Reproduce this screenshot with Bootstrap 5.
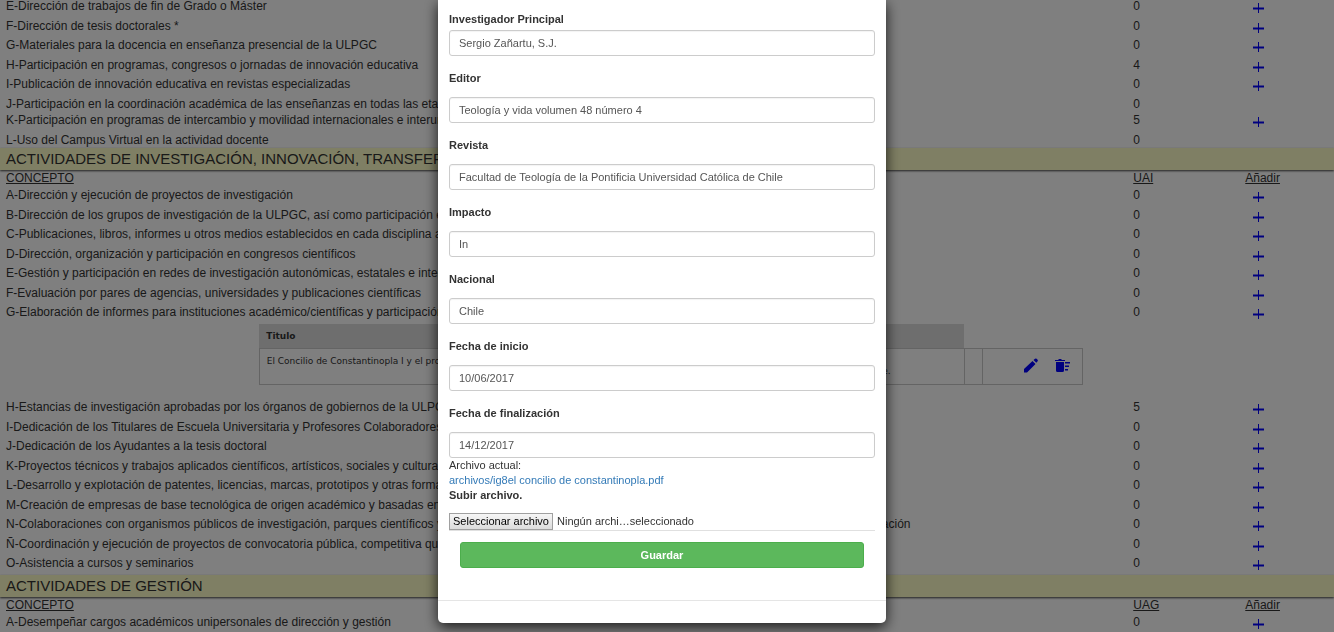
<!DOCTYPE html>
<html lang="es">
<head>
<meta charset="utf-8">
<meta name="viewport" content="width=device-width, initial-scale=1">
<title>Actividades del profesorado</title>
<link href="https://cdn.jsdelivr.net/npm/bootstrap@5.3.0/dist/css/bootstrap.min.css" rel="stylesheet">
<style>
body { font-family: "Liberation Sans", Arial, sans-serif; font-size: 12px; line-height: 16px; color: #333; background: #fff; }
.page { height: 100vh; margin-top: -2px; }
.activities { width: 100%; table-layout: fixed; white-space: nowrap; }
.activities .c-name { width: 84.5%; }
.activities .c-units { width: 8.4%; }
.activities > * > tr > th, .activities > * > tr > td { padding: 0 6px; vertical-align: top; }
.activities > thead th { font-weight: 400; text-decoration: underline; height: 17px; }
.activities > tbody > tr { height: 19px; }
.activities > tbody > tr:nth-child(odd) { height: 20px; }
.activities > tbody > tr.no-add { height: 16px; }
.activities a { color: #00f; display: block; }
.activities svg { display: block; }
.activities .add { padding-top: 5px; margin-left: 8px; width: 11px; }
.band { background: #ffffc8; font-size: 15px; line-height: 22px; height: 22px; padding: 0 6px; margin: 0; font-weight: 400; box-shadow: 0 1px 2px #444; position: relative; }
.activities > tbody > tr > td.detail { padding: 0; height: 75px; }
.works { width: 61.8%; margin-left: 19.4%; table-layout: fixed; font-family: "DejaVu Sans", Verdana, sans-serif; font-size: 9px; line-height: 10px; }
.works th { background: #ddd; height: 24px; padding: 0 7px; }
.works th.blank { background: none; }
.works td { border: 1px solid #c8c8c8; height: 36px; padding: 7px; vertical-align: top; }
.works td + td:not(.tool) { border-left: 0; }
.works td.tool { padding-top: 9px; }
.works .w-title { width: 43.6%; }
.works .w-place { width: 42%; }
.works .w-gap { width: 2.2%; }
.works .place { padding-right: 66px; }
.modal { padding-right: 10px; overflow: hidden; }
.modal-dialog { max-width: 448px; margin: 0 auto; }
.modal-content { border: 0; border-radius: 0 0 5px 5px; box-shadow: 0 4px 14px rgba(0,0,0,.8); font-size: 11px; line-height: 15px; color: #333; }
.modal-body { padding: 12px 11px 32px; }
.field { margin-bottom: 15px; }
.field.last { margin-bottom: 0; }
.field label { display: block; font-weight: 700; margin-bottom: 11px; }
.field.first label { margin-bottom: 3px; }
.upload-title { font-weight: 700; margin-bottom: 10px; }
.field .form-control { height: 26px; font-size: 11px; line-height: 15px; padding: 0 9px; border: 1px solid #ccc; border-radius: 3px; color: #555; box-shadow: inset 0 1px 1px rgba(0,0,0,.05); }
.file-link { color: #337ab7; text-decoration: none; }
.pick { border: 1px solid #a0a0a0; background: linear-gradient(#f6f6f6, #dcdcdc); color: #000; padding: 0 3px; line-height: 15px; cursor: pointer; }
.save-row { border-top: 1px solid #e0e0e0; padding: 11px 11px 0; }
.btn-save { background: #5cb85c; border: 1px solid #4cae4c; color: #fff; font-size: 11px; font-weight: 700; line-height: 15px; height: 26px; padding: 0; border-radius: 3px; }
.modal-footer { min-height: 23px; padding: 0; border-color: #e5e5e5; }
</style>
</head>
<body class="overflow-hidden">
<svg class="d-none">
  <symbol id="plus" viewBox="0 0 11 11"><path d="M0 4.500h11v2H0z" fill="currentColor"/><path d="M5 0h1v10H5z" fill="currentColor"/></symbol>
</svg>
<main class="page overflow-hidden">
  <table class="activities">
    <colgroup><col class="c-name"><col class="c-units"><col></colgroup>
    <tbody>
      <tr><td>E-Dirección de trabajos de fin de Grado o Máster</td><td>0</td><td><a class="add" href="#" aria-label="Añadir"><svg width="11" height="11"><use href="#plus"/></svg></a></td></tr>
      <tr><td>F-Dirección de tesis doctorales *</td><td>0</td><td><a class="add" href="#" aria-label="Añadir"><svg width="11" height="11"><use href="#plus"/></svg></a></td></tr>
      <tr><td>G-Materiales para la docencia en enseñanza presencial de la ULPGC</td><td>0</td><td><a class="add" href="#" aria-label="Añadir"><svg width="11" height="11"><use href="#plus"/></svg></a></td></tr>
      <tr><td>H-Participación en programas, congresos o jornadas de innovación educativa</td><td>4</td><td><a class="add" href="#" aria-label="Añadir"><svg width="11" height="11"><use href="#plus"/></svg></a></td></tr>
      <tr><td>I-Publicación de innovación educativa en revistas especializadas</td><td>0</td><td><a class="add" href="#" aria-label="Añadir"><svg width="11" height="11"><use href="#plus"/></svg></a></td></tr>
      <tr class="no-add"><td>J-Participación en la coordinación académica de las enseñanzas en todas las etapas</td><td>0</td><td></td></tr>
      <tr><td>K-Participación en programas de intercambio y movilidad internacionales e interuniversitarios</td><td>5</td><td><a class="add" href="#" aria-label="Añadir"><svg width="11" height="11"><use href="#plus"/></svg></a></td></tr>
      <tr class="no-add"><td>L-Uso del Campus Virtual en la actividad docente</td><td>0</td><td></td></tr>
    </tbody>
  </table>
  <h2 class="band">ACTIVIDADES DE INVESTIGACIÓN, INNOVACIÓN, TRANSFERENCIA</h2>
  <table class="activities">
    <colgroup><col class="c-name"><col class="c-units"><col></colgroup>
    <thead><tr><th>CONCEPTO</th><th>UAI</th><th>Añadir</th></tr></thead>
    <tbody>
      <tr><td>A-Dirección y ejecución de proyectos de investigación</td><td>0</td><td><a class="add" href="#" aria-label="Añadir"><svg width="11" height="11"><use href="#plus"/></svg></a></td></tr>
      <tr><td>B-Dirección de los grupos de investigación de la ULPGC, así como participación en ellos</td><td>0</td><td><a class="add" href="#" aria-label="Añadir"><svg width="11" height="11"><use href="#plus"/></svg></a></td></tr>
      <tr><td>C-Publicaciones, libros, informes u otros medios establecidos en cada disciplina académica</td><td>0</td><td><a class="add" href="#" aria-label="Añadir"><svg width="11" height="11"><use href="#plus"/></svg></a></td></tr>
      <tr><td>D-Dirección, organización y participación en congresos científicos</td><td>0</td><td><a class="add" href="#" aria-label="Añadir"><svg width="11" height="11"><use href="#plus"/></svg></a></td></tr>
      <tr><td>E-Gestión y participación en redes de investigación autonómicas, estatales e internacionales</td><td>0</td><td><a class="add" href="#" aria-label="Añadir"><svg width="11" height="11"><use href="#plus"/></svg></a></td></tr>
      <tr><td>F-Evaluación por pares de agencias, universidades y publicaciones científicas</td><td>0</td><td><a class="add" href="#" aria-label="Añadir"><svg width="11" height="11"><use href="#plus"/></svg></a></td></tr>
      <tr><td>G-Elaboración de informes para instituciones académico/científicas y participación</td><td>0</td><td><a class="add" href="#" aria-label="Añadir"><svg width="11" height="11"><use href="#plus"/></svg></a></td></tr>
      <tr><td class="detail" colspan="3">
        <table class="works">
          <colgroup><col class="w-title"><col class="w-place"><col class="w-gap"><col></colgroup>
          <thead><tr><th>Titulo</th><th></th><th class="blank"></th><th class="blank"></th></tr></thead>
          <tbody><tr>
            <td>El Concilio de Constantinopla I y el proceso</td>
            <td><div class="place d-flex justify-content-end"><span>Facultad de Teología de la<br>Pontificia Universidad Católica de Chile.</span></div></td>
            <td class="tool"></td>
            <td class="tool"><div class="d-flex justify-content-end gap-3 pe-1">
              <a href="#" aria-label="Editar"><svg width="16" height="18" viewBox="0 0 16 18"><path d="M1 14v-3L9.500 3l3 3-8.500 8.500H1zM10.500 2l1.500-1.300q.8-.6 1.600 0l1 1q.6.8 0 1.600L13.300 4.700z" fill="currentColor"/></svg></a>
              <a href="#" aria-label="Borrar"><svg width="16" height="18" viewBox="0 0 16 18"><path d="M1 4h8v8.500q0 1.500-1.500 1.500h-5Q1 14 1 12.500zM0 2h3l1-1h2l1 1h3v1H0zM10 4h5v1.500h-5zM10 7.500h4V9h-4zM10 11h3v1.500h-3z" fill="currentColor"/></svg></a>
            </div></td>
          </tr></tbody>
        </table>
      </td></tr>
      <tr><td>H-Estancias de investigación aprobadas por los órganos de gobiernos de la ULPGC</td><td>5</td><td><a class="add" href="#" aria-label="Añadir"><svg width="11" height="11"><use href="#plus"/></svg></a></td></tr>
      <tr><td>I-Dedicación de los Titulares de Escuela Universitaria y Profesores Colaboradores</td><td>0</td><td><a class="add" href="#" aria-label="Añadir"><svg width="11" height="11"><use href="#plus"/></svg></a></td></tr>
      <tr><td>J-Dedicación de los Ayudantes a la tesis doctoral</td><td>0</td><td><a class="add" href="#" aria-label="Añadir"><svg width="11" height="11"><use href="#plus"/></svg></a></td></tr>
      <tr><td>K-Proyectos técnicos y trabajos aplicados científicos, artísticos, sociales y culturales</td><td>0</td><td><a class="add" href="#" aria-label="Añadir"><svg width="11" height="11"><use href="#plus"/></svg></a></td></tr>
      <tr><td>L-Desarrollo y explotación de patentes, licencias, marcas, prototipos y otras formas</td><td>0</td><td><a class="add" href="#" aria-label="Añadir"><svg width="11" height="11"><use href="#plus"/></svg></a></td></tr>
      <tr><td>M-Creación de empresas de base tecnológica de origen académico y basadas en</td><td>0</td><td><a class="add" href="#" aria-label="Añadir"><svg width="11" height="11"><use href="#plus"/></svg></a></td></tr>
      <tr><td>N-Colaboraciones con organismos públicos de investigación, parques científicos y tecnológicos, y de otros centros de transferencia, investigación, desarrollo e innovación</td><td>0</td><td><a class="add" href="#" aria-label="Añadir"><svg width="11" height="11"><use href="#plus"/></svg></a></td></tr>
      <tr><td>Ñ-Coordinación y ejecución de proyectos de convocatoria pública, competitiva que</td><td>0</td><td><a class="add" href="#" aria-label="Añadir"><svg width="11" height="11"><use href="#plus"/></svg></a></td></tr>
      <tr><td>O-Asistencia a cursos y seminarios</td><td>0</td><td><a class="add" href="#" aria-label="Añadir"><svg width="11" height="11"><use href="#plus"/></svg></a></td></tr>
    </tbody>
  </table>
  <h2 class="band">ACTIVIDADES DE GESTIÓN</h2>
  <table class="activities">
    <colgroup><col class="c-name"><col class="c-units"><col></colgroup>
    <thead><tr><th>CONCEPTO</th><th>UAG</th><th>Añadir</th></tr></thead>
    <tbody>
      <tr><td>A-Desempeñar cargos académicos unipersonales de dirección y gestión</td><td>0</td><td><a class="add" href="#" aria-label="Añadir"><svg width="11" height="11"><use href="#plus"/></svg></a></td></tr>
    </tbody>
  </table>
</main>

<div class="modal-backdrop show"></div>
<div class="modal d-block" role="dialog" aria-modal="true" aria-label="Editar actividad">
  <div class="modal-dialog">
    <form class="modal-content">
      <div class="modal-body">
        <div class="field first"><label for="ip">Investigador Principal</label><input class="form-control" id="ip" type="text" value="Sergio Zañartu, S.J."></div>
        <div class="field"><label for="editor">Editor</label><input class="form-control" id="editor" type="text" value="Teología y vida volumen 48 número 4"></div>
        <div class="field"><label for="revista">Revista</label><input class="form-control" id="revista" type="text" value="Facultad de Teología de la Pontificia Universidad Católica de Chile"></div>
        <div class="field"><label for="impacto">Impacto</label><input class="form-control" id="impacto" type="text" value="In"></div>
        <div class="field"><label for="nacional">Nacional</label><input class="form-control" id="nacional" type="text" value="Chile"></div>
        <div class="field"><label for="inicio">Fecha de inicio</label><input class="form-control" id="inicio" type="text" value="10/06/2017"></div>
        <div class="field last"><label for="fin">Fecha de finalización</label><input class="form-control" id="fin" type="text" value="14/12/2017"></div>
        <div>Archivo actual:</div>
        <div><a class="file-link" href="#">archivos/ig8el concilio de constantinopla.pdf</a></div>
        <div class="upload-title">Subir archivo.</div>
        <div class="d-flex align-items-center gap-1">
          <input class="visually-hidden" id="archivo" type="file">
          <label class="pick" for="archivo">Seleccionar archivo</label>
          <span>Ningún archi…seleccionado</span>
        </div>
        <div class="save-row"><button class="btn btn-save w-100 d-block" type="submit">Guardar</button></div>
      </div>
      <div class="modal-footer"></div>
    </form>
  </div>
</div>
<script src="https://cdn.jsdelivr.net/npm/bootstrap@5.3.0/dist/js/bootstrap.bundle.min.js"></script>
</body>
</html>
